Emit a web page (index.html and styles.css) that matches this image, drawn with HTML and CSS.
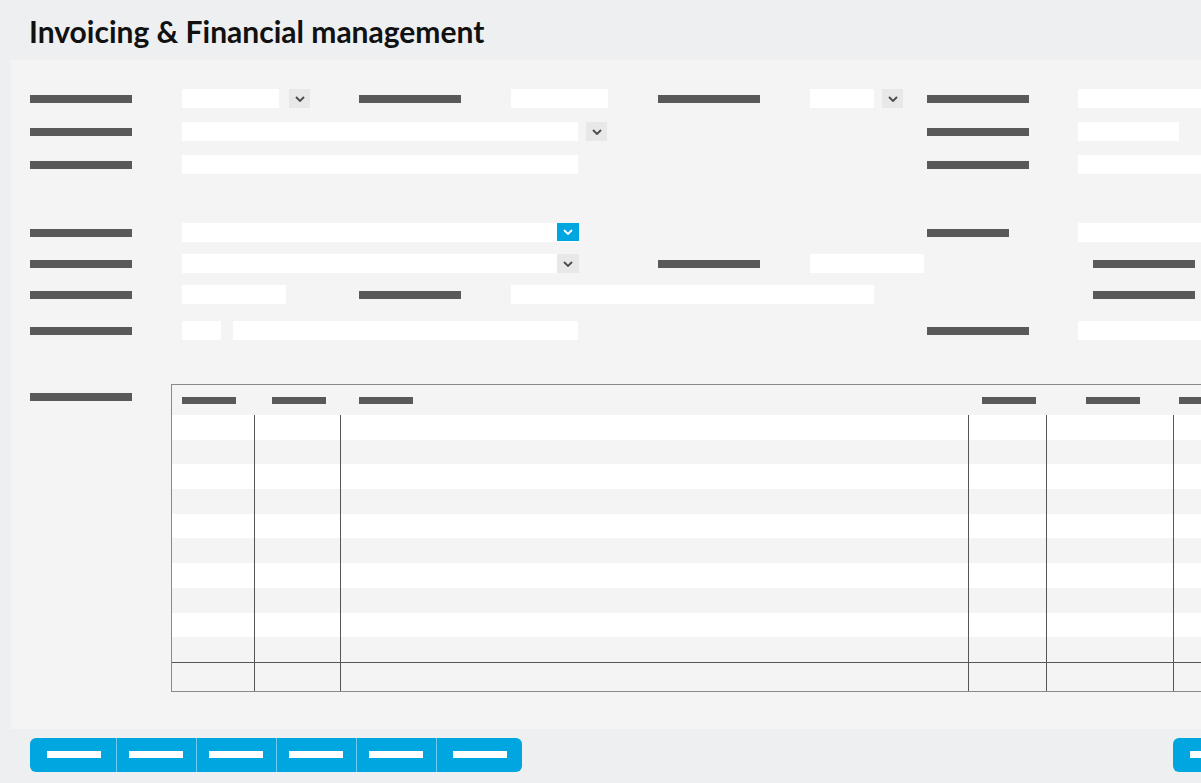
FILE: index.html
```html
<!DOCTYPE html>
<html lang="en">
<head>
    <meta charset="UTF-8">
    <title>Invoicing &amp; Financial management</title>
    <link rel="stylesheet" href="styles.css">
</head>
<body>
    <header class="page-header">
        <h1>Invoicing &amp; Financial management</h1>
    </header>

    <main class="panel">
        <div class="form">
            <div class="form-row">
                <span class="label"></span>
                <div class="field c2">
                    <span class="input" style="width: 97px"></span>
                    <span class="drop"><svg viewBox="0 0 10 6"><polyline points="1,1 5,5 9,1"/></svg></span>
                </div>
                <span class="label c3"></span>
                <div class="field c4"><span class="input" style="width: 97px"></span></div>
                <span class="label c5"></span>
                <div class="field c6">
                    <span class="input" style="width: 64px"></span>
                    <span class="drop"><svg viewBox="0 0 10 6"><polyline points="1,1 5,5 9,1"/></svg></span>
                </div>
                <span class="label c7"></span>
                <div class="field c8"><span class="input full"></span></div>
            </div>

            <div class="form-row">
                <span class="label"></span>
                <div class="field c2-4">
                    <span class="input" style="width: 396px"></span>
                    <span class="drop"><svg viewBox="0 0 10 6"><polyline points="1,1 5,5 9,1"/></svg></span>
                </div>
                <span class="label c7"></span>
                <div class="field c8"><span class="input" style="width: 101px"></span></div>
            </div>

            <div class="form-row">
                <span class="label"></span>
                <div class="field c2-4"><span class="input" style="width: 396px"></span></div>
                <span class="label c7"></span>
                <div class="field c8"><span class="input full"></span></div>
            </div>

            <div class="form-row section-start">
                <span class="label"></span>
                <div class="field c2-4">
                    <span class="select">
                        <span class="drop active"><svg viewBox="0 0 10 6"><polyline points="1,1 5,5 9,1"/></svg></span>
                    </span>
                </div>
                <span class="label short c7"></span>
                <div class="field c8"><span class="input full"></span></div>
            </div>

            <div class="form-row tight">
                <span class="label"></span>
                <div class="field c2-4">
                    <span class="select">
                        <span class="drop"><svg viewBox="0 0 10 6"><polyline points="1,1 5,5 9,1"/></svg></span>
                    </span>
                </div>
                <span class="label c5"></span>
                <div class="field c6"><span class="input" style="width: 114px"></span></div>
                <div class="field c8"><span class="label indent"></span></div>
            </div>

            <div class="form-row tight">
                <span class="label"></span>
                <div class="field c2"><span class="input" style="width: 104px"></span></div>
                <span class="label c3"></span>
                <div class="field c4-6"><span class="input" style="width: 363px"></span></div>
                <div class="field c8"><span class="label indent"></span></div>
            </div>

            <div class="form-row loose">
                <span class="label"></span>
                <div class="field c2-4">
                    <span class="input" style="width: 39px"></span>
                    <span class="input split" style="width: 345px"></span>
                </div>
                <span class="label c7"></span>
                <div class="field c8"><span class="input full"></span></div>
            </div>
        </div>

        <div class="lines">
            <span class="label lines-label"></span>
            <table class="grid">
                <thead>
                    <tr>
                        <th class="col1"><span class="head-bar"></span></th>
                        <th class="col2"><span class="head-bar"></span></th>
                        <th class="col3"><span class="head-bar"></span></th>
                        <th class="col4"><span class="head-bar"></span></th>
                        <th class="col5"><span class="head-bar"></span></th>
                        <th class="col6"><span class="head-bar"></span></th>
                    </tr>
                </thead>
                <tbody>
                    <tr><td></td><td></td><td></td><td></td><td></td><td></td></tr>
                    <tr><td></td><td></td><td></td><td></td><td></td><td></td></tr>
                    <tr><td></td><td></td><td></td><td></td><td></td><td></td></tr>
                    <tr><td></td><td></td><td></td><td></td><td></td><td></td></tr>
                    <tr><td></td><td></td><td></td><td></td><td></td><td></td></tr>
                    <tr><td></td><td></td><td></td><td></td><td></td><td></td></tr>
                    <tr><td></td><td></td><td></td><td></td><td></td><td></td></tr>
                    <tr><td></td><td></td><td></td><td></td><td></td><td></td></tr>
                    <tr><td></td><td></td><td></td><td></td><td></td><td></td></tr>
                    <tr><td></td><td></td><td></td><td></td><td></td><td></td></tr>
                </tbody>
                <tfoot>
                    <tr><td></td><td></td><td></td><td></td><td></td><td></td></tr>
                </tfoot>
            </table>
        </div>
    </main>

    <footer class="actions">
        <div class="button-group">
            <button class="btn"><span class="btn-bar"></span></button>
            <button class="btn"><span class="btn-bar"></span></button>
            <button class="btn"><span class="btn-bar"></span></button>
            <button class="btn"><span class="btn-bar"></span></button>
            <button class="btn"><span class="btn-bar"></span></button>
            <button class="btn"><span class="btn-bar"></span></button>
        </div>
        <button class="btn-single"><span class="btn-bar"></span></button>
    </footer>
</body>
</html>
```

FILE: styles.css
```css
:root {
    --page: #eeeff1;
    --panel: #f4f4f4;
    --bar: #595959;
    --field: #ffffff;
    --drop: #e8e8e8;
    --icon: #4a4a4a;
    --blue: #00a6e0;
    --blue-line: #6ccbef;
    --grid-border: #8a8a8a;
    --grid-line: #555555;
}

* {
    margin: 0;
    padding: 0;
    box-sizing: border-box;
}

body {
    width: 1201px;
    height: 783px;
    overflow: hidden;
    background-color: var(--page);
    font-family: 'Lato', 'Liberation Sans', sans-serif;
}

.page-header {
    height: 60px;
    padding: 2px 0 0 29px;
}

h1 {
    font-size: 30px;
    line-height: 58px;
    font-weight: 700;
    color: #111111;
}

.panel {
    margin-left: 11px;
    padding: 29px 0 37px 19px;
    background-color: var(--panel);
    overflow: hidden;
}

/* form grid */

.form {
    display: flex;
    flex-direction: column;
    gap: 14px;
}

.form-row {
    display: grid;
    grid-template-columns: 152px 177px 152px 147px 152px 117px 151px 1fr;
    height: 19px;
    align-items: center;
}

.form-row.section-start {
    margin-top: 35px;
}

.form-row.tight {
    margin-top: -2px;
}

.form-row.loose {
    margin-top: 3px;
}

.label {
    display: block;
    flex: none;
    width: 102px;
    height: 8px;
    background-color: var(--bar);
}

.label.short {
    width: 82px;
}

.label.indent {
    margin-left: 15px;
}

.c2 { grid-column: 2; }
.c3 { grid-column: 3; }
.c4 { grid-column: 4; }
.c5 { grid-column: 5; }
.c6 { grid-column: 6; }
.c7 { grid-column: 7; }
.c8 { grid-column: 8; }
.c2-4 { grid-column: 2 / 5; }
.c4-6 { grid-column: 4 / 7; }

.field {
    display: flex;
    align-items: center;
    gap: 10px;
    height: 19px;
}

.c6, .c2-4 {
    gap: 8px;
}

.input {
    display: block;
    height: 19px;
    background-color: var(--field);
}

.input.full {
    flex: 1;
}

.input.split {
    margin-left: 4px;
}

.select {
    display: flex;
    justify-content: flex-end;
    width: 397px;
    height: 19px;
    background-color: var(--field);
}

.drop {
    display: flex;
    align-items: center;
    justify-content: center;
    width: 21px;
    height: 19px;
    background-color: var(--drop);
}

.select .drop {
    width: 22px;
}

.drop svg {
    width: 10px;
    height: 6px;
    fill: none;
    stroke: var(--icon);
    stroke-width: 1.8;
}

.drop.active {
    height: 18px;
    background-color: var(--blue);
}

.drop.active svg {
    stroke: #ffffff;
}

/* line items */

.lines {
    display: flex;
    align-items: flex-start;
    margin-top: 44px;
}

.lines-label {
    margin: 9px 39px 0 0;
}

.grid {
    width: 1100px;
    flex: none;
    table-layout: fixed;
    border-collapse: separate;
    border-spacing: 0;
    border: 1px solid var(--grid-border);
    border-right: none;
    background-color: var(--field);
}

.grid th, .grid td {
    box-sizing: border-box;
    padding: 0;
}

.grid th {
    height: 30px;
    text-align: left;
    background-color: var(--panel);
}

.head-bar {
    display: block;
    width: 54px;
    height: 7px;
    background-color: var(--bar);
}

.grid .col1 { width: 82px; padding-left: 10px; }
.grid .col2 { width: 86px; padding-left: 18px; }
.grid .col3 { width: 628px; padding-left: 19px; }
.grid .col4 { width: 78px; padding-left: 14px; }
.grid .col5 { width: 127px; padding-left: 40px; }
.grid .col6 { width: 99px; padding-left: 6px; }

.grid td {
    height: 24.7px;
}

.grid td + td {
    border-left: 1px solid var(--grid-line);
}

.grid tbody tr:nth-child(even) td {
    background-color: var(--panel);
}

.grid tfoot td {
    height: 29px;
    border-top: 1px solid var(--grid-line);
    background-color: var(--panel);
}

/* bottom buttons */

.actions {
    display: flex;
    justify-content: space-between;
    padding: 9px 0 0 30px;
}

.button-group {
    display: flex;
    border-radius: 6px;
    overflow: hidden;
}

.btn, .btn-single {
    display: flex;
    align-items: center;
    height: 34px;
    border: none;
    background-color: var(--blue);
    cursor: pointer;
}

.btn {
    width: 80px;
    padding-left: 12px;
    border-left: 1px solid var(--blue-line);
}

.btn:first-child {
    width: 86px;
    padding-left: 17px;
    border-left: none;
}

.btn:last-child {
    width: 86px;
    padding-left: 16px;
}

.btn-single {
    width: 60px;
    padding-left: 17px;
    margin-right: -32px;
    border-radius: 6px;
}

.btn-bar {
    display: block;
    width: 54px;
    height: 7px;
    background-color: #ffffff;
}
```
